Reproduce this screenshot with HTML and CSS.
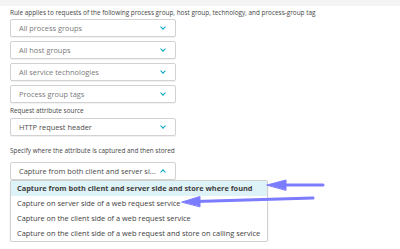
FILE: index.html
```html
<!DOCTYPE html>
<html>
<head>
    <title>Request attribute</title>
    <link rel="stylesheet" href="styles.css">
</head>
<body>
    <div class="topbar"></div>
    <div class="form">
        <div class="label first">Rule applies to requests of the following process group, host group, technology, and process-group tag</div>
        <div class="select-stack">
            <div class="select placeholder">All process groups<span class="chev down"></span></div>
            <div class="select placeholder">All host groups<span class="chev down"></span></div>
            <div class="select placeholder">All service technologies<span class="chev down"></span></div>
            <div class="select placeholder">Process group tags<span class="chev down"></span></div>
        </div>

        <div class="label">Request attribute source</div>
        <div class="select">HTTP request header<span class="chev down"></span></div>

        <div class="label spaced">Specify where the attribute is captured and then stored</div>
        <div class="dropdown">
            <div class="select open">Capture from both client and server si...<span class="chev up"></span></div>
            <ul class="options">
                <li class="selected">Capture from both client and server side and store where found</li>
                <li>Capture on server side of a web request service</li>
                <li>Capture on the client side of a web request service</li>
                <li>Capture on the client side of a web request and store on calling service</li>
            </ul>
            <!-- annotation arrows -->
            <svg class="arrows" width="400" height="80" viewBox="0 0 400 80">
                <g fill="#7c7cff" stroke="#7c7cff" stroke-linecap="round">
                    <line x1="323" y1="23" x2="282" y2="23" stroke-width="3"/>
                    <polygon points="267,23 286,18 286,28" stroke-width="1" stroke-linejoin="round"/>
                    <line x1="313" y1="36" x2="196" y2="39.5" stroke-width="3"/>
                    <polygon points="182,40 200,34.5 200,44.5" stroke-width="1" stroke-linejoin="round"/>
                </g>
            </svg>
        </div>
    </div>
</body>
</html>
```

FILE: styles.css
```css
body {
    margin: 0;
    background-color: white;
    font-family: "Open Sans", "Noto Sans", sans-serif;
    color: #454646;
}

.topbar {
    height: 6px;
    background-color: #f4f4f4;
}

.form {
    padding: 0 10px;
}

.label {
    font-size: 6.4px;
    line-height: 9px;
    color: #454646;
    margin: 3px 0 3px;
}

.label.first {
    margin-top: 2px;
    margin-bottom: 2px;
}

.label.spaced {
    margin-top: 10px;
    margin-bottom: 7px;
}

.select-stack {
    display: flex;
    flex-direction: column;
    gap: 4px;
}

.select {
    box-sizing: border-box;
    width: 166px;
    height: 18px;
    padding: 0 8px 0 8px;
    display: flex;
    align-items: center;
    justify-content: space-between;
    border: 1px solid #d2d2d2;
    border-radius: 2px;
    box-shadow: 0 1px 1px rgba(0,0,0,0.06);
    font-size: 7.4px;
    color: #4a4a4a;
    background-color: white;
}

.select.placeholder {
    color: #7a7a7a;
}

.chev {
    width: 3px;
    height: 3px;
    border-right: 1.2px solid #00a6c0;
    border-bottom: 1.2px solid #00a6c0;
    margin-right: 2px;
}

.chev.down {
    transform: rotate(45deg);
    margin-top: -2px;
}

.chev.up {
    transform: rotate(-135deg);
    margin-top: 2px;
}

.dropdown {
    position: relative;
}

.options {
    list-style: none;
    margin: 0;
    padding: 0;
    width: 258px;
    box-sizing: border-box;
    border: 1px solid #d0d0d0;
    border-radius: 2px;
    box-shadow: 0 1px 2px rgba(0,0,0,0.1);
    font-size: 7.4px;
    color: #3e3e3e;
}

.options li {
    height: 15px;
    line-height: 15px;
    padding: 0 6px;
    white-space: nowrap;
}

.options li.selected {
    background-color: #def3f8;
    font-weight: bold;
}

.arrows {
    position: absolute;
    left: -10px;
    top: 0;
    pointer-events: none;
}
```
